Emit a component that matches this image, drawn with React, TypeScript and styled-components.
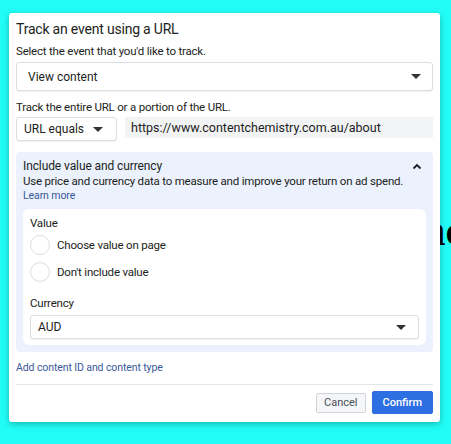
import React from 'react';
import styled, { createGlobalStyle } from 'styled-components';

const GlobalStyle = createGlobalStyle`
  html, body {
    margin: 0;
    padding: 0;
    background: #22fcf7;
  }
  body {
    font-family: Roboto, "Liberation Sans", Arial, sans-serif;
    color: #1c1e21;
  }
`;

const Page = styled.div`
  position: relative;
  width: 451px;
  height: 444px;
  overflow: hidden;
  padding: 13px 0 0 9px;
  box-sizing: border-box;
`;

const BackdropWord = styled.span`
  position: absolute;
  left: 421px;
  top: 205px;
  font-family: "Liberation Serif", "Times New Roman", serif;
  font-weight: bold;
  font-size: 44px;
  color: #000;
  z-index: 0;
`;

const Modal = styled.div`
  position: relative;
  z-index: 1;
  width: 431px;
  box-sizing: border-box;
  background: #fff;
  border-radius: 3px;
  box-shadow: 0 2px 6px rgba(0, 60, 60, 0.35);
  padding: 6px 7px 8px;
  display: flex;
  flex-direction: column;
`;

const Title = styled.h2`
  margin: 0;
  font-size: 14px;
  letter-spacing: -0.2px;
  font-weight: 400;
  line-height: 20px;
  color: #1c1e21;
`;

const Label = styled.div<{ $top?: number }>`
  margin-top: ${p => p.$top ?? 0}px;
  font-size: 11.5px;
  letter-spacing: -0.2px;
  line-height: 16px;
  color: #1c1e21;
`;

const SelectBox = styled.div<{ $height: number; $width?: string; $pad?: number; $padRight?: number }>`
  display: flex;
  align-items: center;
  justify-content: space-between;
  box-sizing: border-box;
  height: ${p => p.$height}px;
  width: ${p => p.$width ?? '100%'};
  padding: 0 ${p => p.$padRight ?? p.$pad ?? 11}px 0 ${p => p.$pad ?? 11}px;
  background: #fff;
  border: 1px solid #dadde1;
  border-radius: 3px;
  box-shadow: 0 1px 1px rgba(0, 0, 0, 0.06);
  font-size: 12px;
  color: #1c1e21;
`;

const Caret = styled.span`
  width: 0;
  height: 0;
  border-left: 5px solid transparent;
  border-right: 5px solid transparent;
  border-top: 5px solid #333;
`;

const UrlRow = styled.div`
  display: flex;
  align-items: flex-start;
  gap: 8px;
  margin-top: 2px;
`;

const UrlInput = styled.div`
  flex: 1;
  height: 21px;
  display: flex;
  align-items: center;
  padding-left: 6px;
  background: #f2f3f5;
  font-size: 12.5px;
  color: #1c1e21;
`;

const ValueSection = styled.section`
  margin-top: 11px;
  background: #ebf1fd;
  border-radius: 4px;
  padding: 6px 7px 7px;
`;

const SectionHeader = styled.div`
  display: flex;
  align-items: center;
  justify-content: space-between;
  padding-right: 4px;
  font-size: 12px;
  letter-spacing: -0.1px;
  line-height: 16px;
  color: #1c1e21;
`;

const Description = styled.div`
  font-size: 11.5px;
  letter-spacing: -0.2px;
  line-height: 15px;
  white-space: nowrap;
  color: #1c1e21;
`;

const Link = styled.a<{ $size?: number }>`
  display: block;
  font-size: ${p => p.$size ?? 10.5}px;
  letter-spacing: -0.1px;
  line-height: 14px;
  color: #385898;
  text-decoration: none;
`;

const InnerCard = styled.div`
  margin-top: 6px;
  background: #fff;
  border-radius: 6px;
  padding: 6px 7px 6px;
  display: flex;
  flex-direction: column;
`;

const RadioList = styled.div`
  display: flex;
  flex-direction: column;
  gap: 4px;
  margin-top: 2px;
`;

const RadioRow = styled.label`
  display: flex;
  align-items: center;
  gap: 7px;
  height: 23px;
  font-size: 11.5px;
  letter-spacing: -0.2px;
  color: #1c1e21;
`;

const RadioCircle = styled.span`
  width: 18px;
  height: 18px;
  border-radius: 50%;
  border: 1px solid #dadde1;
  background: #fff;
`;

const Divider = styled.hr`
  margin: 9px 0 0;
  border: 0;
  border-top: 1px solid #e4e6eb;
`;

const Footer = styled.div`
  display: flex;
  justify-content: flex-end;
  align-items: center;
  gap: 6px;
  margin-top: 6px;
`;

const Button = styled.button<{ $primary?: boolean }>`
  font-family: inherit;
  font-size: 11px;
  font-weight: ${p => (p.$primary ? 500 : 400)};
  height: ${p => (p.$primary ? 23 : 20)}px;
  padding: 0 ${p => (p.$primary ? 10 : 7)}px;
  border-radius: 2px;
  border: 1px solid ${p => (p.$primary ? '#2d6ee2' : '#d0d3d8')};
  background: ${p => (p.$primary ? '#2d6ee2' : '#f5f6f7')};
  color: ${p => (p.$primary ? '#fff' : '#4b4f56')};
`;

const ChevronUp = () => (
  <svg width="10" height="7" viewBox="0 0 10 7">
    <path d="M1.5 5.5 L5 2 L8.5 5.5" fill="none" stroke="#1c1e21" strokeWidth="1.8" />
  </svg>
);

const App: React.FC = () => {
  return (
    <>
      <GlobalStyle />
      <Page>
        <BackdropWord>nc</BackdropWord>
        <Modal>
          <Title>Track an event using a URL</Title>
          <Label $top={4}>Select the event that you'd like to track.</Label>
          <SelectBox $height={29} style={{ marginTop: 3 }}>
            View content
            <Caret />
          </SelectBox>

          <Label $top={8}>Track the entire URL or a portion of the URL.</Label>
          <UrlRow>
            <SelectBox $height={24} $width="101px" $pad={7} $padRight={13}>
              URL equals
              <Caret />
            </SelectBox>
            <UrlInput>https://www.contentchemistry.com.au/about</UrlInput>
          </UrlRow>

          <ValueSection>
            <SectionHeader>
              Include value and currency
              <ChevronUp />
            </SectionHeader>
            <Description>Use price and currency data to measure and improve your return on ad spend.</Description>
            <Link href="#">Learn more</Link>

            <InnerCard>
              <Label>Value</Label>
              <RadioList>
                {['Choose value on page', "Don't include value"].map(option => (
                  <RadioRow key={option}>
                    <RadioCircle />
                    {option}
                  </RadioRow>
                ))}
              </RadioList>
              <Label $top={12}>Currency</Label>
              <SelectBox $height={24} $pad={7} $padRight={12} style={{ marginTop: 4 }}>
                AUD
                <Caret />
              </SelectBox>
            </InnerCard>
          </ValueSection>

          <Link href="#" style={{ marginTop: 9 }}>
            Add content ID and content type
          </Link>
          <Divider />
          <Footer>
            <Button>Cancel</Button>
            <Button $primary>Confirm</Button>
          </Footer>
        </Modal>
      </Page>
    </>
  );
};

export default App;
